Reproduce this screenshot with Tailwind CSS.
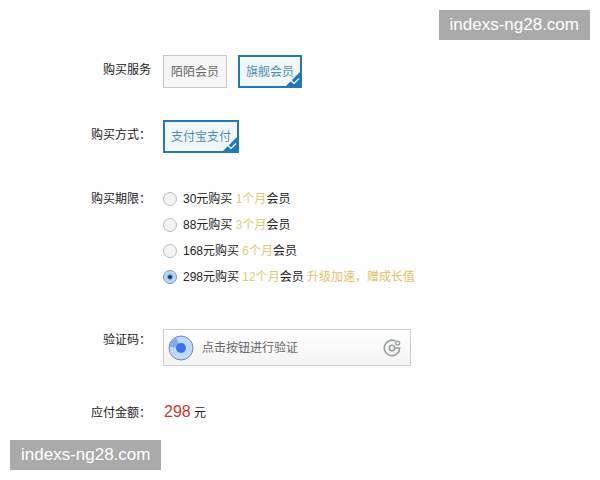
<!DOCTYPE html>
<html lang="zh-CN">
<head>
  <meta charset="UTF-8" />
  <meta name="viewport" content="width=device-width, initial-scale=1.0" />
  <title>购买会员</title>
  <script src="https://cdn.jsdelivr.net/npm/@tailwindcss/browser@4"></script>
</head>
<body class="relative min-h-screen bg-[#fefefe] font-['Liberation_Sans','Noto_Sans_CJK_SC',sans-serif] text-xs text-[#222]">
  <div class="absolute top-[10px] right-[10px] bg-[#aaa] px-[11px] text-[17px] leading-[30px] text-white">indexs-ng28.com</div>

  <form class="pt-[55px]">
    <!-- 购买服务 -->
    <div class="mb-8 flex gap-3">
      <div class="w-[151px] shrink-0 text-right leading-[30px]">购买服务</div>
      <div class="flex gap-[11px]">
        <button type="button" class="h-[33px] border border-[#c8c8c8] bg-[#f6f6f6] px-[7px] text-[#666]">陌陌会员</button>
        <button type="button" class="relative h-[33px] border-2 border-[#2878b0] bg-[#f1f7f8] px-[6px] text-[#4c8db4]">
          旗舰会员
          <svg class="absolute right-0 bottom-0 size-[14px]" viewBox="0 0 14 14" fill="none">
            <path d="M14 0V14H0Z" fill="#1b78c2" />
            <path d="M5 8.5L8 11.5L13 6.5" stroke="#fff" stroke-width="1.2" />
          </svg>
        </button>
      </div>
    </div>

    <!-- 购买方式 -->
    <div class="mb-[33px] flex gap-3">
      <div class="w-[151px] shrink-0 text-right leading-[30px]">购买方式：</div>
      <button type="button" class="relative h-[33px] border-2 border-[#2878b0] bg-[#f1f7f8] px-[6px] text-[#4c8db4]">
        支付宝支付
        <svg class="absolute right-0 bottom-0 size-[14px]" viewBox="0 0 14 14" fill="none">
          <path d="M14 0V14H0Z" fill="#1b78c2" />
          <path d="M5 8.5L8 11.5L13 6.5" stroke="#fff" stroke-width="1.2" />
        </svg>
      </button>
    </div>

    <!-- 购买期限 -->
    <div class="mb-[39px] flex gap-3">
      <div class="w-[151px] shrink-0 text-right leading-[26px]">购买期限：</div>
      <div class="flex flex-col">
        <label class="flex h-[26px] items-center gap-[6px]">
          <input type="radio" name="term" value="1" class="size-[14px] shrink-0 appearance-none rounded-full border border-[#bbb] bg-[#f4f4f4] checked:border-[#6d93b8] checked:bg-[radial-gradient(circle,#0d2340_1px,#a3cdf2_3px,#c6e0f6_6px)]" />
          <span>30元购买 <span class="text-[#d9cd78]">1个月</span>会员</span>
        </label>
        <label class="flex h-[26px] items-center gap-[6px]">
          <input type="radio" name="term" value="3" class="size-[14px] shrink-0 appearance-none rounded-full border border-[#bbb] bg-[#f4f4f4] checked:border-[#6d93b8] checked:bg-[radial-gradient(circle,#0d2340_1px,#a3cdf2_3px,#c6e0f6_6px)]" />
          <span>88元购买 <span class="text-[#d9cd78]">3个月</span>会员</span>
        </label>
        <label class="flex h-[26px] items-center gap-[6px]">
          <input type="radio" name="term" value="6" class="size-[14px] shrink-0 appearance-none rounded-full border border-[#bbb] bg-[#f4f4f4] checked:border-[#6d93b8] checked:bg-[radial-gradient(circle,#0d2340_1px,#a3cdf2_3px,#c6e0f6_6px)]" />
          <span>168元购买 <span class="text-[#d9cd78]">6个月</span>会员</span>
        </label>
        <label class="flex h-[26px] items-center gap-[6px]">
          <input type="radio" name="term" value="12" checked class="size-[14px] shrink-0 appearance-none rounded-full border border-[#bbb] bg-[#f4f4f4] checked:border-[#6d93b8] checked:bg-[radial-gradient(circle,#0d2340_1px,#a3cdf2_3px,#c6e0f6_6px)]" />
          <span>298元购买 <span class="text-[#d9cd78]">12个月</span>会员 <span class="text-[#dfc266]">升级加速，赠成长值</span></span>
        </label>
      </div>
    </div>

    <!-- 验证码 -->
    <div class="mb-8 flex gap-3">
      <div class="w-[151px] shrink-0 text-right leading-[22px]">验证码：</div>
      <button type="button" class="flex h-[37px] w-[248px] items-center border border-[#ccc] bg-linear-to-b from-white to-[#f3f3f3] pr-[9px] pl-1 text-[#666]">
        <svg class="size-[26px]" viewBox="0 0 26 26">
          <circle cx="13" cy="13" r="12" fill="#bfd9f8" stroke="#7389b5" />
          <path d="M13 13L1.6 12A11.5 11.5 0 0 1 8 2.7Z" fill="#83aaf0" />
          <circle cx="13" cy="13" r="5" fill="#3c70e8" />
        </svg>
        <span class="ml-2">点击按钮进行验证</span>
        <svg class="ml-auto size-[18px]" viewBox="0 0 18 18" fill="none" stroke="#969d9b" stroke-width="1.6">
          <path d="M12.6 2.1A7.7 7.7 0 1 0 16.7 9H11.7" />
          <circle cx="9" cy="9" r="2.7" />
          <circle cx="14.7" cy="4" r="1.9" stroke-width="1.4" />
        </svg>
      </button>
    </div>

    <!-- 应付金额 -->
    <div class="flex items-center gap-3">
      <div class="w-[151px] shrink-0 text-right leading-7">应付金额：</div>
      <div class="pl-px leading-7"><span class="text-base leading-7 text-[#c9382f]">298</span> <span>元</span></div>
    </div>
  </form>

  <div class="absolute bottom-[10px] left-[10px] bg-[#aaa] px-[11px] text-[17px] leading-[30px] text-white">indexs-ng28.com</div>
</body>
</html>
